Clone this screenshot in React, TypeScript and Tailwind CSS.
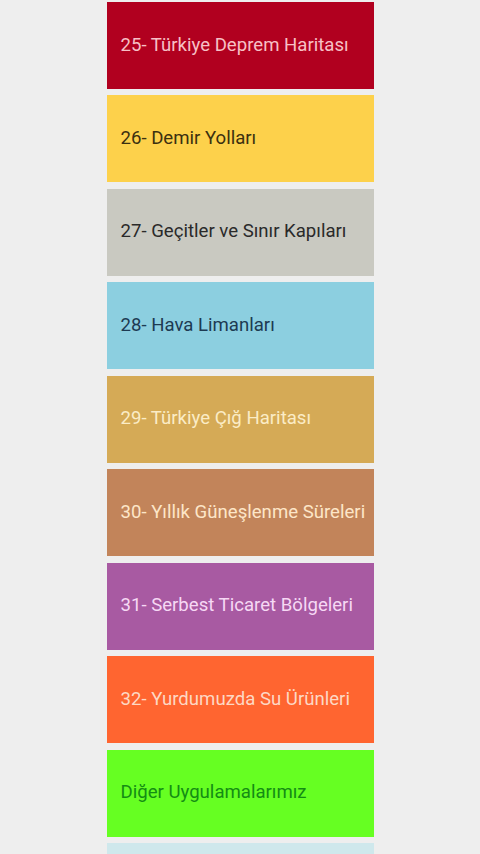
import React from "react";

const items: { label: string; cls: string }[] = [
  { label: "25- Türkiye Deprem Haritası", cls: "bg-[#b1001f] text-[#f7c0c6]" },
  { label: "26- Demir Yolları", cls: "bg-[#fdd14b] text-[#3b3010]" },
  { label: "27- Geçitler ve Sınır Kapıları", cls: "bg-[#c9c9c1] text-[#2a2a2a]" },
  { label: "28- Hava Limanları", cls: "bg-[#8ccfe0] text-[#1d3a52]" },
  { label: "29- Türkiye Çığ Haritası", cls: "bg-[#d5aa56] text-[#fbecc6]" },
  { label: "30- Yıllık Güneşlenme Süreleri", cls: "bg-[#c2845a] text-[#fde6c8]" },
  { label: "31- Serbest Ticaret Bölgeleri", cls: "bg-[#a85aa2] text-[#f6d8f4]" },
  { label: "32- Yurdumuzda Su Ürünleri", cls: "bg-[#ff6530] text-[#fdd8c4]" },
  { label: "Diğer Uygulamalarımız", cls: "bg-[#66ff22] text-[#138c14]" },
  { label: "", cls: "bg-[#cfe8ec] text-[#333333]" },
];

export default function App() {
  return (
    <div className="w-[480px] h-[854px] overflow-hidden bg-[#eeeeee] flex justify-center font-[Roboto,'Noto_Sans',sans-serif]">
      <div className="w-[267px] flex flex-col gap-[6.45px] pt-[2px]">
        {items.map((it, i) => (
          <div
            key={i}
            className={`${it.cls} h-[87px] shrink-0 flex items-center pl-[14px] text-[18.6px] whitespace-nowrap`}
          >
            {it.label}
          </div>
        ))}
      </div>
    </div>
  );
}
